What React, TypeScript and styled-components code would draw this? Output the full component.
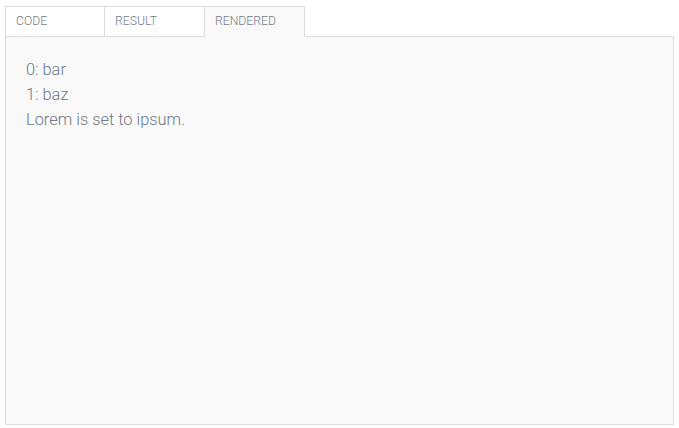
import styled, { createGlobalStyle } from 'styled-components';

const GlobalStyle = createGlobalStyle`
  html, body {
    margin: 0;
    background: #ffffff;
  }
  body {
    padding: 6px 5px 0;
    font-family: Roboto, "Liberation Sans", sans-serif;
  }
`;

const Wrapper = styled.div`
  display: flex;
  flex-direction: column;
  height: 419px;
`;

const TabBar = styled.div`
  display: flex;
`;

const Tab = styled.div<{ active?: boolean }>`
  box-sizing: border-box;
  width: 100px;
  height: 31px;
  margin-bottom: -1px;
  padding: 7px 0 0 10px;
  border: 1px solid #dddddd;
  border-left: none;
  border-bottom-color: ${(p) => (p.active ? '#f9f9f9' : '#dddddd')};
  background: ${(p) => (p.active ? '#f9f9f9' : '#ffffff')};
  color: #737d8a;
  font-size: 12.2px;
  font-weight: 300;
  text-transform: uppercase;
  position: relative;
  z-index: ${(p) => (p.active ? 1 : 0)};

  &:first-child {
    border-left: 1px solid #dddddd;
  }
`;

const Panel = styled.div`
  flex: 1;
  border: 1px solid #dddddd;
  background: #f9f9f9;
  padding: 20px 20px;
  color: #6f7a86;
  font-size: 16.4px;
  font-weight: 300;
  line-height: 25px;
`;

const Line = styled.div``;

const tabs = ['Code', 'Result', 'Rendered'];

const App = () => (
  <>
    <GlobalStyle />
    <Wrapper>
      <TabBar>
        {tabs.map((t) => (
          <Tab key={t} active={t === 'Rendered'}>
            {t}
          </Tab>
        ))}
      </TabBar>
      <Panel>
        <Line>0: bar</Line>
        <Line>1: baz</Line>
        <Line>Lorem is set to ipsum.</Line>
      </Panel>
    </Wrapper>
  </>
);

export default App;
